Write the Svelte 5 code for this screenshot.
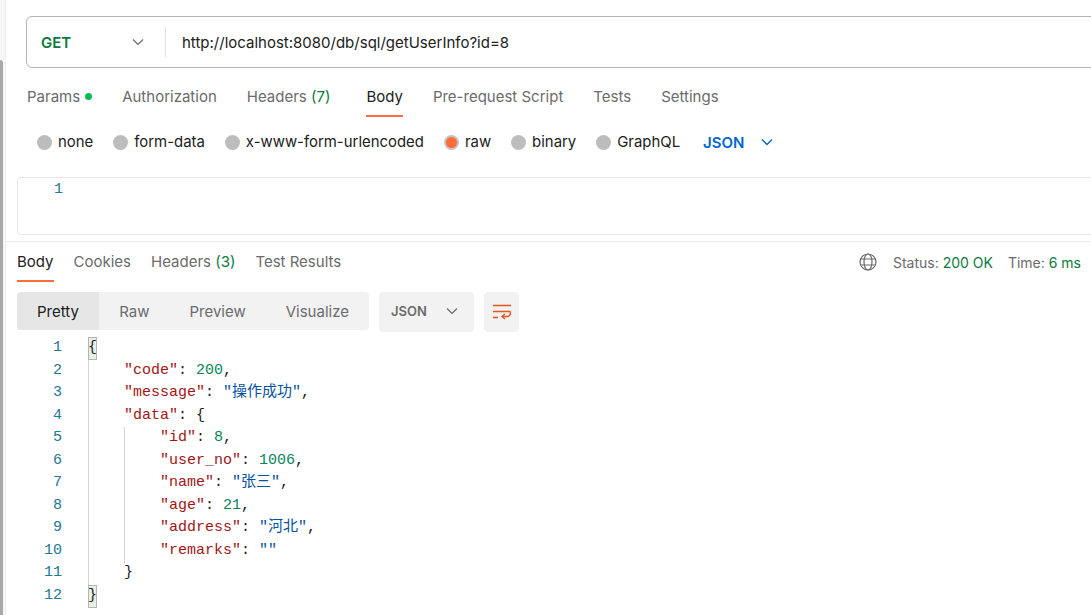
<script>
  const reqTabs = [
    { label: "Authorization" },
    { label: "Headers", count: "(7)" },
    { label: "Body", active: true },
    { label: "Pre-request Script" },
    { label: "Tests" },
    { label: "Settings" },
  ];
  const bodyTypes = ["none", "form-data", "x-www-form-urlencoded", "raw", "binary", "GraphQL"];
  const views = ["Pretty", "Raw", "Preview", "Visualize"];

  // one entry per line of the response: indent level, then [token type, text]
  const lines = [
    { indent: 0, tokens: [["match", "{"]] },
    { indent: 1, tokens: [["k", '"code"'], ["p", ": "], ["n", "200"], ["p", ","]] },
    { indent: 1, tokens: [["k", '"message"'], ["p", ": "], ["s", '"操作成功"'], ["p", ","]] },
    { indent: 1, tokens: [["k", '"data"'], ["p", ": {"]] },
    { indent: 2, tokens: [["k", '"id"'], ["p", ": "], ["n", "8"], ["p", ","]] },
    { indent: 2, tokens: [["k", '"user_no"'], ["p", ": "], ["n", "1006"], ["p", ","]] },
    { indent: 2, tokens: [["k", '"name"'], ["p", ": "], ["s", '"张三"'], ["p", ","]] },
    { indent: 2, tokens: [["k", '"age"'], ["p", ": "], ["n", "21"], ["p", ","]] },
    { indent: 2, tokens: [["k", '"address"'], ["p", ": "], ["s", '"河北"'], ["p", ","]] },
    { indent: 2, tokens: [["k", '"remarks"'], ["p", ": "], ["s", '""']] },
    { indent: 1, tokens: [["p", "}"]] },
    { indent: 0, tokens: [["match", "}"]] },
  ];
</script>

<div class="window">
  <div class="rail"><div class="thumb"></div></div>

  <main class="main">
    <div class="url-bar">
      <div class="method">
        <span>GET</span>
        <svg class="chev" width="12" height="12" viewBox="0 0 12 12"><path d="M1 3.5 6 8.5 11 3.5" /></svg>
      </div>
      <div class="url">http://localhost:8080/db/sql/getUserInfo?id=8</div>
    </div>

    <nav class="req-tabs">
      <div class="tab">Params<i class="dot"></i></div>
      {#each reqTabs as tab}
        <div class="tab" class:active={tab.active} class:counted={tab.count}>
          {tab.label}{#if tab.count}&nbsp;<span class="count">{tab.count}</span>{/if}
        </div>
      {/each}
    </nav>

    <div class="body-types">
      {#each bodyTypes as type}
        <div class="radio" class:on={type === "raw"}><i></i>{type}</div>
      {/each}
      <span class="lang">JSON</span>
      <svg class="chev blue" width="12" height="12" viewBox="0 0 12 12"><path d="M1 3.5 6 8.5 11 3.5" /></svg>
    </div>

    <div class="editor"><span class="ln">1</span></div>

    <section class="response">
      <div class="res-head">
        <nav class="res-tabs">
          <div class="tab active">Body</div>
          <div class="tab">Cookies</div>
          <div class="tab">Headers&nbsp;<span class="count">(3)</span></div>
          <div class="tab">Test Results</div>
        </nav>
        <div class="status">
          <svg class="globe" width="18" height="18" viewBox="0 0 18 18">
            <circle cx="9" cy="9" r="8" />
            <ellipse cx="9" cy="9" rx="4" ry="8" />
            <path d="M1.6 6h14.8M1.6 12h14.8" />
          </svg>
          <span class="stat">Status: <b>200 OK</b></span>
          <span class="stat">Time: <b>6 ms</b></span>
        </div>
      </div>

      <div class="toolbar">
        <div class="views">
          {#each views as v, i}
            <div class="view" class:sel={i === 0}>{v}</div>
          {/each}
        </div>
        <div class="format">
          <span>JSON</span>
          <svg class="chev" width="12" height="12" viewBox="0 0 12 12"><path d="M1 3.5 6 8.5 11 3.5" /></svg>
        </div>
        <div class="wrap">
          <svg width="18" height="16" viewBox="0 0 18 16">
            <path d="M0 1.5h18M0 7.5h17c1 3-.5 5-3 5H9" />
            <path d="M12 10 9 12.5 12 15M0 13.5h5" />
          </svg>
        </div>
      </div>

      <div class="code">
        <div class="guide g1"></div>
        <div class="guide g2"></div>
        {#each lines as line, i}
          <div class="line">
            <span class="num">{i + 1}</span>
            <span class="text indent-{line.indent}">
              {#each line.tokens as [type, text]}<span class={type}>{text}</span>{/each}
            </span>
          </div>
        {/each}
      </div>
    </section>
  </main>
</div>

<style>
  :global(body) {
    margin: 0;
    background: #fff;
    overflow: hidden;
  }

  .window {
    display: flex;
    width: 1091px;
    height: 615px;
    overflow: hidden;
    font-family: Inter, "Noto Sans", sans-serif;
    font-size: 15px;
    color: #6b6b6b;
  }

  .rail {
    flex: none;
    width: 6px;
    padding-top: 60px;
    background: #f6f6f6;
    border-right: 1px solid #efefef;
    box-sizing: border-box;
  }

  .thumb {
    width: 3px;
    height: 555px;
    background: #a8a8a8;
    border-top-right-radius: 3px;
  }

  .main {
    flex: 1;
    min-width: 0;
  }

  .chev {
    fill: none;
    stroke: #6b6b6b;
    stroke-width: 1.2;
    flex: none;
  }

  .url-bar {
    display: flex;
    align-items: center;
    height: 52px;
    box-sizing: border-box;
    margin: 16px -20px 0 20px;
    border: 1px solid #b3b3b3;
    border-radius: 6px;
  }

  .method {
    display: flex;
    align-items: center;
    justify-content: space-between;
    width: 139px;
    height: 30px;
    box-sizing: border-box;
    padding: 0 21px 0 14px;
    border-right: 1px solid #e3e3e3;
    color: #0b7a3e;
    font-weight: 600;
    font-size: 15px;
  }

  .url {
    padding-left: 16px;
    color: #212121;
    font-size: 15px;
  }

  .req-tabs {
    display: flex;
    gap: 30px;
    height: 43px;
    margin: 6px 0 0 21px;
    padding-top: 3px;
    box-sizing: border-box;
  }

  .tab {
    display: flex;
    align-items: center;
    white-space: nowrap;
    height: 100%;
    box-sizing: border-box;
    border-bottom: 2px solid transparent;
  }

  .tab.active {
    color: #212121;
    border-bottom-color: #ff6c37;
  }

  .tab.counted {
    margin-right: 6px;
  }

  .dot {
    width: 7px;
    height: 7px;
    margin-left: 5px;
    border-radius: 50%;
    background: #0cbb52;
  }

  .count {
    color: #0b7a3e;
  }

  .body-types {
    display: flex;
    align-items: center;
    height: 22px;
    margin: 14px 0 0 31px;
    font-size: 14.92px;
  }

  .radio {
    display: flex;
    align-items: center;
    gap: 6px;
    margin-right: 20px;
    color: #212121;
  }

  .radio i {
    width: 15px;
    height: 15px;
    border-radius: 50%;
    background: #bdbdbd;
    box-sizing: border-box;
  }

  .radio.on i {
    background: #ff6c37;
    border: 2px solid #c4c4c4;
  }

  .lang {
    margin: 0 17px 0 3px;
    color: #0265d2;
    font-weight: 600;
    font-size: 15px;
  }

  .chev.blue {
    stroke: #0265d2;
    stroke-width: 1.4;
  }

  .editor {
    height: 58px;
    box-sizing: border-box;
    margin: 24px -10px 0 11px;
    border: 1px solid #e6e6e6;
    border-radius: 4px;
    padding: 0 0 0 36px;
  }

  .ln,
  .num {
    font-family: "Liberation Mono", monospace;
    font-size: 15px;
    color: #237893;
  }

  .response {
    margin-top: 6px;
    border-top: 1px solid #ebebeb;
  }

  .res-head {
    display: flex;
    justify-content: space-between;
    height: 40px;
    margin-left: 11px;
  }

  .res-tabs {
    display: flex;
    gap: 20px;
    padding-top: 1px;
    box-sizing: border-box;
  }

  .status {
    display: flex;
    align-items: center;
    gap: 15px;
    margin-right: 10px;
    font-size: 14px;
    height: 40px;
  }

  .globe {
    fill: none;
    stroke: #6b6b6b;
    stroke-width: 1.2;
    margin-right: 1px;
  }

  .stat b {
    font-weight: 400;
    color: #0b7a3e;
  }

  .toolbar {
    display: flex;
    gap: 10px;
    margin: 10px 0 0 11px;
    height: 38px;
  }

  .views {
    display: flex;
    background: #f2f2f2;
    border-radius: 4px;
    overflow: hidden;
    width: 352px;
    height: 38px;
  }

  .view {
    display: flex;
    align-items: center;
    padding: 0 20px;
    white-space: nowrap;
  }

  .view.sel {
    background: #e6e6e6;
    color: #212121;
    width: 83px;
    box-sizing: border-box;
  }

  .format {
    display: flex;
    align-items: center;
    justify-content: space-between;
    width: 95px;
    height: 40px;
    box-sizing: border-box;
    padding: 0 16px 2px 12px;
    background: #f2f2f2;
    border-radius: 4px;
    font-size: 13px;
    font-weight: 600;
  }

  .wrap {
    display: flex;
    align-items: center;
    justify-content: center;
    width: 35px;
    height: 40px;
    box-sizing: border-box;
    padding-bottom: 1px;
    background: #f2f2f2;
    border-radius: 4px;
  }

  .wrap svg {
    fill: none;
    stroke: #e8531f;
    stroke-width: 1.4;
  }

  .code {
    position: relative;
    margin-top: 7px;
    font-family: "Liberation Mono", "Noto Sans CJK SC", monospace;
    font-size: 15px;
    line-height: 22.55px;
    color: #212121;
  }

  .line {
    display: flex;
    height: 22.55px;
    white-space: pre;
  }

  .num {
    flex: none;
    width: 56px;
    text-align: right;
  }

  .text {
    margin-left: 26px;
  }

  .indent-1 {
    padding-left: 36px;
  }

  .indent-2 {
    padding-left: 72px;
  }

  .guide {
    position: absolute;
    width: 1px;
    background: #d4d4d4;
  }

  .g1 {
    left: 82px;
    top: 0;
    height: 248px;
  }

  .g2 {
    left: 118px;
    top: 90px;
    height: 136px;
  }

  .match {
    display: inline-block;
    position: relative;
    width: 9px;
    outline: 1px solid #b4b4b4;
    outline-offset: -1px;
    background: #eaf0e8;
  }

  .k {
    color: #a31515;
  }

  .n {
    color: #098658;
  }

  .s {
    color: #0451a5;
  }
</style>
